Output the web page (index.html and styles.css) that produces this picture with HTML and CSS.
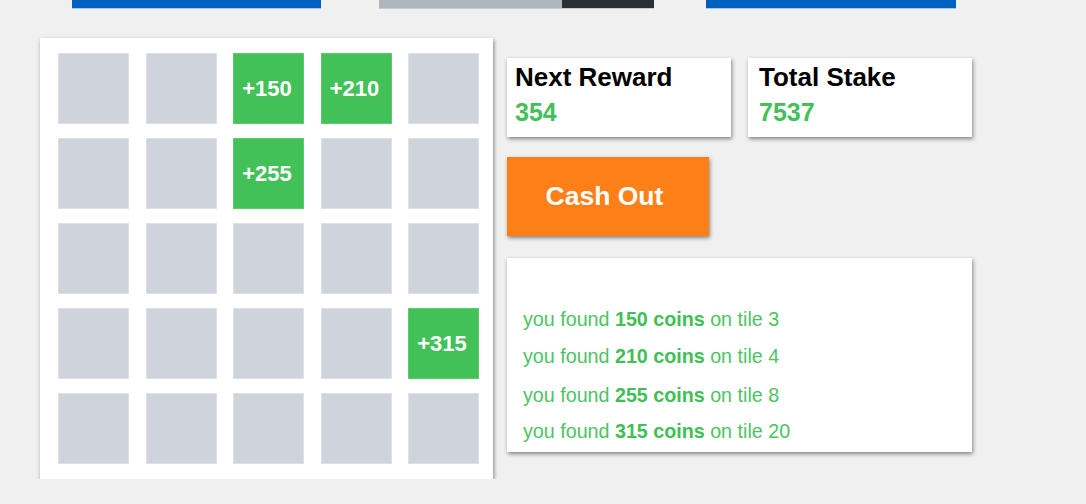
FILE: index.html
```html
<!DOCTYPE html>
<html>
<head>
<meta charset="utf-8">
<link rel="stylesheet" href="styles.css">
</head>
<body>
<div class="topbar">
  <div class="bar-blue bar-first"></div>
  <div class="progress"><div class="progress-fill"></div><div class="progress-rest"></div></div>
  <div class="bar-blue bar-last"></div>
</div>
<div class="main">
  <div class="board">
    <div class="tile"></div>
    <div class="tile"></div>
    <div class="tile found">+150</div>
    <div class="tile found">+210</div>
    <div class="tile"></div>
    <div class="tile"></div>
    <div class="tile"></div>
    <div class="tile found">+255</div>
    <div class="tile"></div>
    <div class="tile"></div>
    <div class="tile"></div>
    <div class="tile"></div>
    <div class="tile"></div>
    <div class="tile"></div>
    <div class="tile"></div>
    <div class="tile"></div>
    <div class="tile"></div>
    <div class="tile"></div>
    <div class="tile"></div>
    <div class="tile found">+315</div>
    <div class="tile"></div>
    <div class="tile"></div>
    <div class="tile"></div>
    <div class="tile"></div>
    <div class="tile"></div>
  </div>
  <div class="side">
    <div class="stats">
      <div class="card">
        <div class="card-title">Next Reward</div>
        <div class="card-value">354</div>
      </div>
      <div class="card card-alt">
        <div class="card-title">Total Stake</div>
        <div class="card-value">7537</div>
      </div>
    </div>
    <button class="cash">Cash Out</button>
    <div class="log">
      <p class="log-line">you found <b>150 coins</b> on tile 3</p>
      <p class="log-line">you found <b>210 coins</b> on tile 4</p>
      <p class="log-line l3">you found <b>255 coins</b> on tile 8</p>
      <p class="log-line l4">you found <b>315 coins</b> on tile 20</p>
    </div>
  </div>
</div>
</body>
</html>
```

FILE: styles.css
```css
html, body {
  margin: 0;
  padding: 0;
  background: #f0f0f0;
  font-family: "Liberation Sans", Arial, sans-serif;
}

.topbar {
  display: flex;
  height: 8px;
  padding-left: 72px;
}

.bar-blue {
  width: 249px;
  height: 8px;
  background: #005fbf;
  box-shadow: 0 1px 0 #a9c4e4;
}

.bar-last {
  margin-left: 52px;
  width: 250px;
}

.progress {
  display: flex;
  margin-left: 58px;
  width: 275px;
  height: 8px;
  box-shadow: 0 1px 0 #c8ccd0;
}

.progress-fill {
  width: 183px;
  background: #adb5bd;
}

.progress-rest {
  flex: 1;
  background: #2b3035;
}

.main {
  display: flex;
  align-items: flex-start;
  margin-top: 30px;
  padding-left: 40px;
  gap: 14px;
}

.board {
  box-sizing: border-box;
  width: 453px;
  height: 441px;
  background: #fff;
  box-shadow: 1px 2px 4px rgba(0, 0, 0, 0.45);
  padding: 15px 13px 17px 18px;
  display: grid;
  grid-template-columns: repeat(5, 71px);
  grid-template-rows: repeat(5, 71px);
  column-gap: 16.5px;
  row-gap: 14px;
}

.tile {
  box-sizing: border-box;
  background: #cfd4dc;
  border: 1px solid #dde1e6;
  display: flex;
  align-items: center;
  justify-content: center;
  padding-right: 3px;
  color: #fff;
  font-weight: bold;
  font-size: 22px;
}

.tile.found {
  background: #42c158;
  border-color: #5ccb70;
}

.side {
  width: 465px;
  display: flex;
  flex-direction: column;
  align-items: flex-start;
}

.stats {
  display: flex;
  gap: 17px;
  margin-top: 20px;
}

.card {
  box-sizing: border-box;
  width: 224px;
  height: 79px;
  background: #fff;
  box-shadow: 1px 2px 4px rgba(0, 0, 0, 0.45);
  padding: 4px 8px 0;
}

.card-alt {
  padding-left: 11px;
}

.card-title {
  font-size: 26px;
  font-weight: bold;
  color: #000;
  line-height: 30px;
}

.card-value {
  margin-top: 5px;
  font-size: 25px;
  font-weight: bold;
  color: #42c158;
  line-height: 30px;
}

.cash {
  margin-top: 20px;
  width: 202px;
  height: 79px;
  border: none;
  background: #fd7f17;
  color: #fff;
  font-family: "Liberation Sans", Arial, sans-serif;
  font-weight: bold;
  font-size: 26.5px;
  box-shadow: 1px 2px 4px rgba(0, 0, 0, 0.45);
  padding: 0 7px 0 0;
}

.log {
  box-sizing: border-box;
  margin-top: 22px;
  width: 465px;
  height: 194px;
  background: #fff;
  box-shadow: 1px 2px 4px rgba(0, 0, 0, 0.45);
  padding: 43px 16px 0;
}

.log-line {
  margin: 0;
  font-size: 19.7px;
  line-height: 37px;
  color: #4cc463;
}

.log-line b {
  color: #3fbf56;
}

.l3 {
  margin-top: 2px;
}

.l4 {
  margin-top: -1px;
}
```
